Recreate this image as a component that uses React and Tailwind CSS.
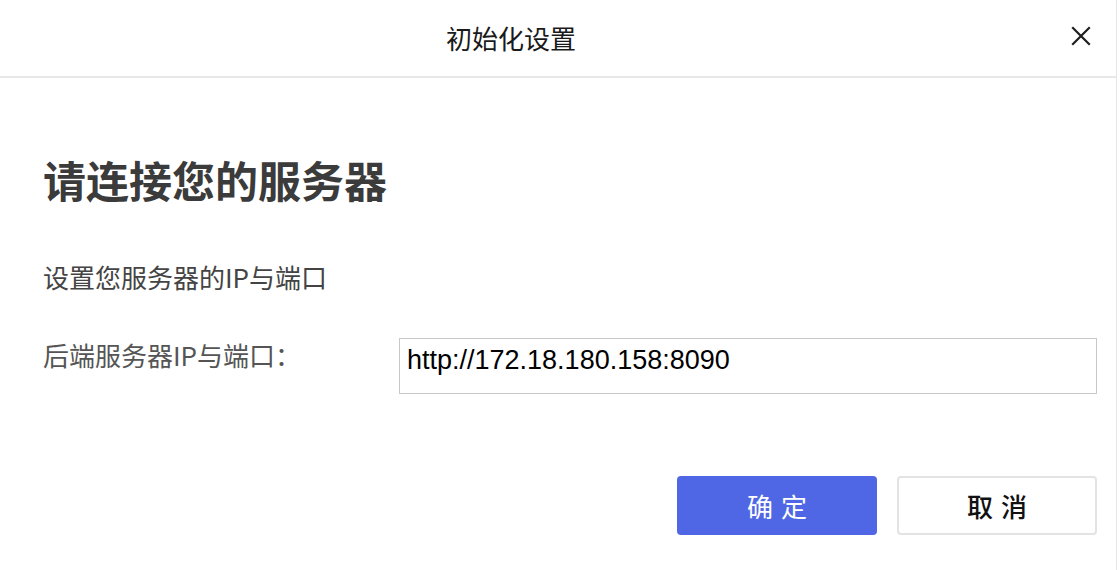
import React from 'react';

const cjk = { fontFamily: '"Noto Sans CJK SC", "Noto Sans", sans-serif' };

function CloseIcon() {
    return (
        <svg width="20" height="20" viewBox="0 0 20 20" fill="none">
            <path d="M2 2 L18 18 M18 2 L2 18" stroke="#1f1f1f" strokeWidth="2.2" strokeLinecap="square" />
        </svg>
    );
}

export default function App() {
    const serverUrl = 'http://172.18.180.158:8090';

    return (
        <div className="w-[1120px] h-[570px] bg-white overflow-hidden" style={cjk}>
            <div className="w-[1117px] h-full border-r border-[#e6e6e6] flex flex-col">
                {/* dialog header */}
                <div className="h-[78px] shrink-0 border-b-2 border-[#e8e8e8] flex items-center">
                    <span className="ml-[446px] text-[26px] leading-[26px] text-[#1a1a1a]">初始化设置</span>
                    <button className="ml-auto mr-[25px] mb-[4px] flex items-center justify-center">
                        <CloseIcon />
                    </button>
                </div>

                {/* dialog body */}
                <div className="pl-[43px] pr-[19px] flex flex-col">
                    <h1 className="mt-[79px] text-[43px] leading-[44px] font-bold text-[#3b3b3b]">请连接您的服务器</h1>
                    <p className="mt-[63px] text-[26px] leading-[26px] text-[#444]">设置您服务器的IP与端口</p>

                    <div className="mt-[48px] flex items-start">
                        <label className="w-[356px] shrink-0 mt-[4px] text-[26px] leading-[26px] text-[#555]">
                            后端服务器IP与端口：
                        </label>
                        <input
                            readOnly
                            value={serverUrl}
                            className="w-[698px] h-[56px] border border-[#c8c8c8] px-[7px] pb-[12px] text-[27px] text-black outline-none"
                            style={{ fontFamily: '"Liberation Sans", Arial, sans-serif' }}
                        />
                    </div>

                    <div className="mt-[82px] flex justify-end gap-[20px]">
                        <button className="w-[200px] h-[59px] rounded-[4px] bg-[#5067e5] text-white text-[26px] tracking-[0.3em] pl-[0.3em] flex items-center justify-center">
                            确定
                        </button>
                        <button className="w-[200px] h-[59px] rounded-[4px] border-2 border-[#e3e3e3] bg-white text-[#111] text-[26px] font-medium tracking-[0.3em] pl-[0.3em] flex items-center justify-center">
                            取消
                        </button>
                    </div>
                </div>
            </div>
        </div>
    );
}
